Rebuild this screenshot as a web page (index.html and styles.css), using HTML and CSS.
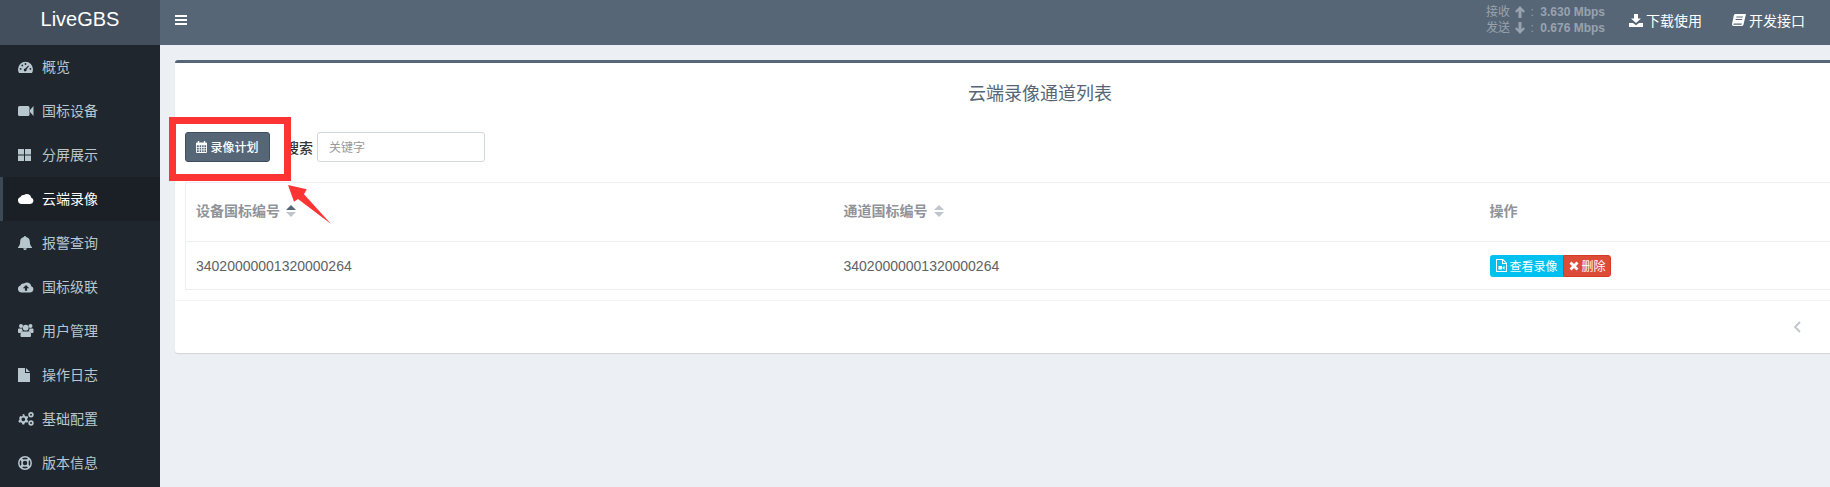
FILE: index.html
```html
<!DOCTYPE html>
<html lang="zh-CN">
<head>
<meta charset="utf-8">
<title>LiveGBS</title>
<link rel="stylesheet" href="styles.css">
</head>
<body>
<div class="app">
  <aside class="sidebar">
    <div class="logo">LiveGBS</div>
    <nav class="menu">
      <a class="item"><svg class="ico" viewBox="0 0 16 14"><path fill-rule="evenodd" d="M7.500 1.800A7.500 7.500 0 0 0 0 9.300c0 1.400.4 2.600 1 3.700h13c.6-1.100 1-2.300 1-3.700a7.500 7.500 0 0 0-7.500-7.500zM2.600 9.800a.9.900 0 1 1 0-1.800.9.900 0 0 1 0 1.800zM4.300 6.300a.9.900 0 1 1 0-1.800.9.900 0 0 1 0 1.800zM7.500 4.900a.9.900 0 1 1 0-1.800.9.900 0 0 1 0 1.800zM11 5.900 8.500 9.500a1.400 1.400 0 1 1-1.200-.9l3-3zM12.400 9.800a.9.900 0 1 1 0-1.800.9.900 0 0 1 0 1.800z"/></svg>概览</a>
      <a class="item"><svg class="ico" viewBox="0 0 16 14"><path d="M1.500 2h8.500A1.500 1.500 0 0 1 11.500 3.500v7A1.500 1.500 0 0 1 10 12H1.500A1.500 1.500 0 0 1 0 10.500v-7A1.500 1.500 0 0 1 1.500 2zM12 6 15.500 2v10L12 8z"/></svg>国标设备</a>
      <a class="item"><svg class="ico" viewBox="0 0 16 14"><path d="M0 1h6v5.500H0zM7 1h6v5.500H7zM0 7.500h6V13H0zM7 7.500h6V13H7z"/></svg>分屏展示</a>
      <a class="item active"><svg class="ico" viewBox="0 0 16 14"><path d="M3.700 12A3.600 3.600 0 0 1 2.400 5 3.200 3.200 0 0 1 6 3 4.500 4.500 0 0 1 13.300 5.800 3.200 3.200 0 0 1 12.300 12z"/></svg>云端录像</a>
      <a class="item"><svg class="ico" viewBox="0 0 16 14"><path d="M7 0a1.100 1.100 0 0 1 1.100 1.100c2.900.5 3.700 2.700 3.700 4.400 0 3 .9 4.400 2.200 5.700v.8H0v-.8c1.300-1.300 2.200-2.700 2.200-5.700 0-1.700.8-3.900 3.700-4.400A1.100 1.100 0 0 1 7 0zM5.200 12.300h3.600a1.800 1.800 0 0 1-3.600 0z"/></svg>报警查询</a>
      <a class="item"><svg class="ico" viewBox="0 0 16 14"><path fill-rule="evenodd" d="M3.700 12.500A3.600 3.600 0 0 1 2.400 5.500 3.200 3.200 0 0 1 6 3.500 4.500 4.500 0 0 1 13.300 6.300 3.200 3.200 0 0 1 12.300 12.500zM8 5 4.800 8.200h2.100v2.600h2.200V8.200h2.100z"/></svg>国标级联</a>
      <a class="item"><svg class="ico" viewBox="0 0 16 14"><path d="M3 0a2 2 0 1 1 0 4 2 2 0 0 1 0-4zM12.500 0a2 2 0 1 1 0 4 2 2 0 0 1 0-4zM7.700.8a2.900 2.900 0 1 1 0 5.800 2.900 2.900 0 0 1 0-5.800zM0 5.200c0-.5.600-.7 1.200-.7H4a3.800 3.800 0 0 0 1 2.700C3.300 7.500 2.800 8.300 2.600 9H1C.4 9 0 8.700 0 8zM15.500 5.200c0-.5-.6-.7-1.200-.7h-2.800a3.800 3.800 0 0 1-1 2.700c1.700.3 2.200 1.100 2.400 1.800h1.600c.6 0 1-.3 1-1zM4.800 7.500h5.900c1.700 0 2.300 1.300 2.300 3.200v1c0 .8-.5 1.300-1.300 1.300H3.800c-.8 0-1.300-.5-1.300-1.300v-1c0-1.900.6-3.200 2.300-3.200z"/></svg>用户管理</a>
      <a class="item"><svg class="ico" viewBox="0 0 16 14"><path d="M0 0h7v5h5v9H0zM8 0l4 4H8z"/></svg>操作日志</a>
      <a class="item"><svg class="ico" viewBox="0 0 16 14"><path fill-rule="evenodd" d="M4.300 2.300h2l.4 1.500 1.100.6 1.500-.5 1 1.700-1.100 1.100v1.300l1.100 1.100-1 1.700-1.500-.5-1.100.6-.4 1.500h-2l-.4-1.500-1.100-.6-1.500.5-1-1.700 1.100-1.100V6.700L1.300 5.600l1-1.700 1.500.5 1.100-.6zM5.300 5.400a1.900 1.900 0 1 0 0 3.800 1.900 1.900 0 0 0 0-3.800z"/><path fill-rule="evenodd" d="M13 0a2.700 2.700 0 1 1 0 5.400A2.700 2.700 0 0 1 13 0zm0 1.700a1 1 0 1 0 0 2 1 1 0 0 0 0-2zM13 8.300a2.700 2.700 0 1 1 0 5.400 2.700 2.700 0 0 1 0-5.400zm0 1.700a1 1 0 1 0 0 2 1 1 0 0 0 0-2z"/></svg>基础配置</a>
      <a class="item"><svg class="ico ring" viewBox="0 0 16 14"><circle cx="7" cy="7" r="6.200"/><circle cx="7" cy="7" r="3"/><path class="ring-band" d="M2.700 2.700 4.800 4.800M11.300 2.700 9.200 4.800M2.700 11.300 4.800 9.200M11.300 11.300 9.200 9.200"/></svg>版本信息</a>
    </nav>
  </aside>
  <div class="main">
    <header class="topbar">
      <svg class="bars" viewBox="0 0 12 10"><path d="M0 0h12v2H0zM0 4h12v2H0zM0 8h12v2H0z"/></svg>
      <div class="top-right">
        <div class="stats">
          <div class="stat">接收 <svg class="arrow" viewBox="0 0 10 12"><path d="M5 0l5 5.200-1.500 1.600L6.500 4.700V12h-3V4.700L1.500 6.800 0 5.200z"/></svg> : <span class="rate">3.630 Mbps</span></div>
          <div class="stat">发送 <svg class="arrow" viewBox="0 0 10 12"><path d="M5 12 0 6.800l1.500-1.600 2 2.100V0h3v7.300l2-2.100L10 6.800z"/></svg> : <span class="rate">0.676 Mbps</span></div>
        </div>
        <a class="top-link"><svg class="top-ico" viewBox="0 0 14 13"><path d="M5 0h4v4.500h3L7 9 2 4.500h3zM0 9h4l3 2.200L10 9h4v4H0z"/></svg>下载使用</a>
        <a class="top-link"><svg class="top-ico" viewBox="0 0 14 13"><path fill-rule="evenodd" d="M3.500 0H14l-2.500 10.500c-.2.800-.8 1.500-1.800 1.500H1.500C.5 12 0 11 0 10L1.800 1.500C2 .6 2.600 0 3.500 0zM4.500 2.500 4.200 3.500h6.500l.3-1zM3.800 5l-.3 1H10l.3-1zM2 9.500c-.4 0-.6.300-.6.700s.2.600.6.600h7.500l.3-1.300z"/></svg>开发接口</a>
      </div>
    </header>
    <main class="content">
      <section class="box">
        <h3 class="box-title">云端录像通道列表</h3>
        <div class="toolbar">
          <button class="btn-plan"><svg class="btn-ico" viewBox="0 0 12 13"><path fill-rule="evenodd" d="M2 0h1.500v1.500h5V0H10v1.500h1c.6 0 1 .4 1 1V12c0 .6-.4 1-1 1H1c-.6 0-1-.4-1-1V2.500c0-.6.400-1 1-1h1zM1 4.500V6.500h2V4.500zM4 4.500V6.500h1.700V4.500zM6.700 4.500V6.500H8.300V4.500zM9.200 4.500V6.500H11V4.500zM1 7.300V9.200h2V7.300zM4 7.300V9.200h1.700V7.300zM6.700 7.300V9.200H8.300V7.300zM9.200 7.300V9.200H11V7.300zM1 10V12h2V10zM4 10V12h1.700V10zM6.700 10V12H8.300V10zM9.200 10V12H11V10z"/></svg>录像计划</button>
          <label class="search-label">搜索</label>
          <input class="search-input" type="text" placeholder="关键字">
        </div>
        <table class="grid">
          <colgroup><col class="c1"><col class="c2"><col class="c3"></colgroup>
          <thead>
            <tr>
              <th>设备国标编号<svg class="sort" viewBox="0 0 10 12"><path class="up-on" d="M5 0l5 5H0z"/><path class="off" d="M0 7h10l-5 5z"/></svg></th>
              <th>通道国标编号<svg class="sort" viewBox="0 0 10 12"><path class="off" d="M5 0l5 5H0z"/><path class="off" d="M0 7h10l-5 5z"/></svg></th>
              <th>操作</th>
            </tr>
          </thead>
          <tbody>
            <tr>
              <td>34020000001320000264</td>
              <td>34020000001320000264</td>
              <td>
                <div class="actions">
                  <a class="act act-view"><svg class="act-ico" viewBox="0 0 11 13"><path fill-rule="evenodd" d="M0 0h7l4 4v9H0zM1 1v11h9V5H6V1zM7 1.500V4h2.500zM2.500 7h3.500v3.500H2.500zM6.500 8.200 8.500 7v3.500L6.500 9.300z"/></svg>查看录像</a><a class="act act-del"><svg class="act-ico x" viewBox="0 0 10 10"><path d="M2.500.5 5 3 7.500.5l2 2L7 5l2.500 2.500-2 2L5 7 2.500 9.500l-2-2L3 5 .5 2.500z"/></svg>删除</a>
                </div>
              </td>
            </tr>
          </tbody>
        </table>
        <div class="box-footer">
          <svg class="page-prev" viewBox="0 0 7 12"><path d="M6 1 1 6l5 5" fill="none" stroke-width="1.800"/></svg>
        </div>
      </section>
    </main>
  </div>
</div>
<div class="mark-rect"></div>
<svg class="mark-arrow" viewBox="0 0 60 50"><path d="M2 2 20.700 6.300 18 11.300 45 41 12 16 8 18.700Z"/></svg>
</body>
</html>
```

FILE: styles.css
```css
* { box-sizing: border-box; }
html, body { margin: 0; padding: 0; width: 1830px; height: 487px; overflow: hidden; }
body {
  position: relative;
  font-family: "Liberation Sans", "Noto Sans CJK SC", sans-serif;
  font-size: 14px;
  color: #333;
  background: #ecf0f5;
}
.app { display: flex; width: 1920px; height: 487px; }
.sidebar { width: 160px; flex: none; background: #1f262e; }
.logo {
  height: 45px;
  background: #434f5c;
  color: #fff;
  font-size: 20px;
  line-height: 38px;
  text-align: center;
}
.item {
  display: flex;
  align-items: center;
  height: 44px;
  color: #b8c7ce;
  border-left: 3px solid transparent;
  padding: 0 0 2px 15px;
}
.item.active { background: #1a2026; color: #fff; border-left-color: #3c4a58; }
.ico { width: 16px; height: 14px; margin: 2px 8px 0 0; fill: currentColor; flex: none; }
.ring { fill: none; stroke: currentColor; stroke-width: 1.500; }
.ring-band { stroke-width: 2.500; }
.main { flex: 1; min-width: 0; display: flex; flex-direction: column; }
.topbar {
  height: 45px;
  flex: none;
  background: #566676;
  display: flex;
  align-items: center;
  padding: 0 25px 5px 15px;
  width: 1670px;
}
.bars { width: 12px; height: 10px; fill: #fff; }
.top-right { margin-left: auto; display: flex; align-items: center; }
.stats { font-size: 12px; color: #98a3af; line-height: 16px; margin-right: 24px; }
.stat { display: flex; align-items: center; white-space: pre; height: 16px; }
.arrow { width: 10px; height: 12px; fill: #98a3af; margin: 0 2px; }
.rate { margin-left: 3px; font-weight: 700; }
.top-link { color: #fff; display: flex; align-items: center; margin-left: 30px; }
.top-link:first-of-type { margin-left: 0; }
.top-ico { width: 14px; height: 13px; fill: #fff; margin-right: 3px; }
.content { padding: 15px; flex: 1; }
.box {
  width: 1730px;
  height: 293px;
  background: #fff;
  border-top: 3px solid #566676;
  border-radius: 3px;
  box-shadow: 0 1px 1px rgba(0,0,0,.12);
  padding: 0 10px;
  display: flex;
  flex-direction: column;
}
.box-title {
  margin: 0;
  font-size: 18px;
  font-weight: 400;
  color: #566676;
  text-align: center;
  line-height: 20px;
  padding-top: 21px;
  height: 69px;
}
.toolbar { display: flex; align-items: center; height: 30px; }
.btn-plan {
  width: 85px;
  height: 30px;
  background: #566676;
  border: 1px solid #3f4f5f;
  border-radius: 3px;
  color: #fff;
  font: inherit;
  font-size: 12px;
  font-weight: 500;
  padding: 0 0 1px;
  display: flex;
  align-items: center;
  justify-content: center;
}
.btn-ico { width: 11px; height: 12px; fill: #fff; margin-right: 3px; }
.search-label { margin-left: 15px; margin-right: 4px; color: #333; font-weight: 500; }
.search-input {
  width: 168px;
  height: 30px;
  border: 1px solid #d2d6de;
  border-radius: 3px;
  padding: 2px 10px 0 11px;
  font: inherit;
  font-size: 12px;
  outline: none;
}
.search-input::placeholder { color: #999; }
.grid {
  margin-top: 20px;
  width: 1710px;
  border-collapse: collapse;
  table-layout: fixed;
  border: 1px solid #ebeef5;
}
.c1 { width: 648px; }
.c2 { width: 646px; }
.grid th, .grid td { padding: 0 0 0 10px; text-align: left; border-bottom: 1px solid #ebeef5; }
.grid th { height: 59px; color: #909399; font-weight: 700; font-size: 14px; padding-bottom: 4px; }
.grid td { height: 48px; color: #606266; font-size: 14px; }
.sort { width: 10px; height: 12px; margin-left: 6px; vertical-align: -1px; }
.up-on { fill: #566676; }
.off { fill: #c0c4cc; }
.actions { display: flex; }
.act {
  height: 22px;
  display: flex;
  align-items: center;
  color: #fff;
  font-size: 12px;
  padding-bottom: 1px;
}
.act-view { width: 73px; background: #00c0ef; border-radius: 3px 0 0 3px; padding-left: 6px; }
.act-del { width: 48px; background: #dd4b39; border: 1px solid #d73925; border-radius: 0 3px 3px 0; padding-left: 5px; }
.act-ico { width: 11px; height: 13px; fill: #fff; margin: 1px 3px 0 0; }
.act-ico.x { width: 10px; height: 10px; }
.box-footer {
  margin: 10px -10px 0;
  border-top: 1px solid #f4f4f4;
  height: 53px;
  padding: 20px 0 0 1619px;
}
.page-prev { display: block; width: 7px; height: 12px; stroke: #c0c4cc; }
.mark-rect {
  position: absolute;
  left: 169px;
  top: 117px;
  width: 122px;
  height: 64px;
  border: 7px solid #fd3434;
}
.mark-arrow {
  position: absolute;
  left: 286px;
  top: 183px;
  width: 60px;
  height: 50px;
  fill: #fd3434;
}
```
